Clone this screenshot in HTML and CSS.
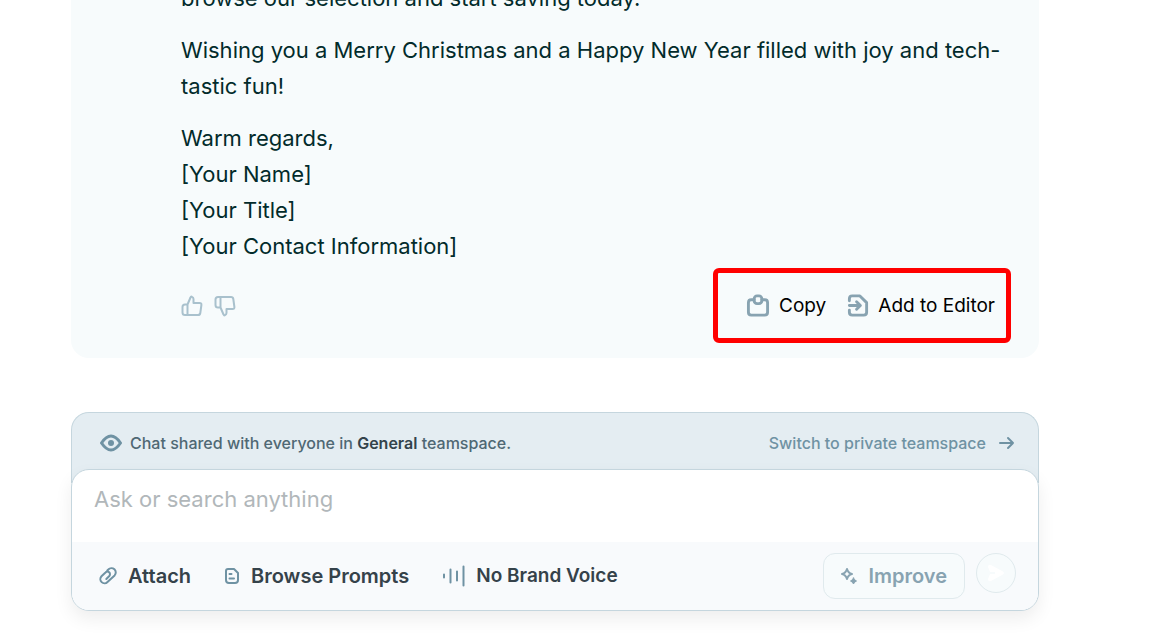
FILE: index.html
```html
<!DOCTYPE html>
<html lang="en">
<head>
    <meta charset="UTF-8">
    <meta name="viewport" content="width=device-width, initial-scale=1.0">
    <title>Chat</title>
    <link rel="stylesheet" href="styles.css">
</head>
<body>
    <main class="chat">
        <article class="message">
            <div class="message-text">
                <p>browse our selection and start saving today.</p>
                <p>Wishing you a Merry Christmas and a Happy New Year filled with joy and tech-tastic fun!</p>
                <p>Warm regards,<br>[Your Name]<br>[Your Title]<br>[Your Contact Information]</p>
            </div>
            <div class="message-footer">
                <div class="feedback">
                    <button type="button" aria-label="Good response">
                        <svg width="22" height="22" viewBox="0 0 22 22"><path d="M6.5 9.5 9.5 2.5Q10 1.2 11 1.8Q12.5 2.5 12.5 4V8H18.5Q20.7 8 20.4 10L19.3 18Q19 20 17 20H4Q1.5 20 1.5 17.5V12Q1.5 9.5 4 9.5H6.5V20"/></svg>
                    </button>
                    <button type="button" aria-label="Bad response">
                        <svg width="22" height="22" viewBox="0 0 22 22"><path d="M6.5 12.5 9.5 19.5Q10 20.8 11 20.2Q12.5 19.5 12.5 18V14H18.5Q20.7 14 20.4 12L19.3 4Q19 2 17 2H4Q1.5 2 1.5 4.5V10Q1.5 12.5 4 12.5H6.5V2"/></svg>
                    </button>
                </div>
                <div class="message-actions">
                    <button type="button">
                        <svg width="24" height="24" viewBox="0 0 24 24"><path d="M8 6H5Q2 6 2 9V19Q2 22 5 22H19Q22 22 22 19V9Q22 6 19 6H16"/><rect x="8" y="2" width="8" height="8" rx="3"/></svg>
                        Copy
                    </button>
                    <button type="button">
                        <svg width="22" height="24" viewBox="0 0 22 24"><path d="M2 7V5Q2 2 5 2H13L20 9V19Q20 22 17 22H5Q2 22 2 19V17M2 12H13M9.5 8L13.5 12L9.5 16"/></svg>
                        Add to Editor
                    </button>
                </div>
            </div>
        </article>

        <section class="composer">
            <div class="share-bar">
                <svg class="eye" width="22" height="18" viewBox="0 0 22 18"><path d="M1.5 9Q11-5 20.5 9Q11 23 1.5 9Z"/><circle cx="11" cy="9" r="3"/></svg>
                <span>Chat shared with everyone in <strong>General</strong> teamspace.</span>
                <a href="#">Switch to private teamspace
                    <svg width="16" height="14" viewBox="0 0 16 14"><path d="M1 7H14M9 2L14 7L9 12"/></svg>
                </a>
            </div>
            <form class="prompt">
                <input type="text" placeholder="Ask or search anything" aria-label="Ask or search anything">
                <div class="toolbar">
                    <button type="button" class="tool">
                        <svg width="18" height="18" viewBox="0 0 18 18"><path d="M8.3 3.5L9.3 2.5A3.9 3.9 0 0 1 15.6 8.4L8.5 15A4 4 0 0 1 2.5 9.3L6.5 5.5A2.5 2.5 0 0 1 10.3 9L7.3 12"/></svg>
                        Attach
                    </button>
                    <button type="button" class="tool">
                        <svg width="16" height="18" viewBox="0 0 16 18"><path d="M4 2H10L14 6V13Q14 16 11 16H5Q2 16 2 13V4Q2 2 4 2ZM5.5 7H7.5M5.5 11.5H10"/></svg>
                        Browse Prompts
                    </button>
                    <button type="button" class="tool voice">
                        <svg width="24" height="24" viewBox="0 0 24 24"><path d="M2 10.5V13.5M8.5 5.5V18.5M15 7.5V16.5M21.5 2.5V21.5"/></svg>
                        No Brand Voice
                    </button>
                    <button type="button" class="improve">
                        <svg width="18" height="18" viewBox="0 0 18 18"><path d="M7 2Q8 6 12 7Q8 8 7 12Q6 8 2 7Q6 6 7 2Z"/><path class="spark" d="M13.5 11Q14.3 13.2 16.5 14Q14.3 14.8 13.5 17Q12.7 14.8 10.5 14Q12.7 13.2 13.5 11Z"/></svg>
                        Improve
                    </button>
                    <button type="submit" class="send" aria-label="Send">
                        <svg width="18" height="18" viewBox="0 0 18 18"><path d="M1 3Q1 0 4 1L15 7Q19 9 15 11L4 17Q1 18 1 15L3 10H8V8H3Z"/></svg>
                    </button>
                </div>
            </form>
        </section>
    </main>
</body>
</html>
```
FILE: styles.css
```css
* {
    box-sizing: border-box;
}
body {
    margin: 0;
    background-color: #fff;
    color: #022b2b;
    font-family: Inter, sans-serif;
    overflow: hidden;
}
button, input {
    font: inherit;
    color: inherit;
}
button {
    display: flex;
    align-items: center;
    padding: 0;
    border: 0;
    background: none;
    cursor: pointer;
}
svg {
    flex: none;
    fill: none;
    stroke: #6f92a3;
    stroke-width: 2;
    stroke-linecap: round;
    stroke-linejoin: round;
}
.chat {
    padding: 0 136px 24px 71px;
}
.message {
    margin-top: -20px;
    padding: 0 28px 15px 110px;
    background-color: #f7fbfc;
    border-radius: 0 0 18px 18px;
}
.message-text {
    font-size: 22px;
    line-height: 36px;
}
.message-text p {
    margin: 0 0 16px;
}
.message-text p:last-child {
    margin-bottom: 4px;
}
.message-footer {
    display: flex;
    align-items: center;
    justify-content: space-between;
}
.feedback {
    display: flex;
    gap: 11px;
}
.feedback svg {
    stroke: #a9c1cd;
}
.message-actions {
    display: flex;
    gap: 21px;
    padding: 20px 11px 20px 28px;
    border: 5px solid #f00;
    border-radius: 6px;
    color: #000;
    font-size: 19px;
    line-height: 25px;
}
.message-actions button {
    gap: 9px;
}
.message-actions svg {
    height: 23px;
    stroke: #88a3b1;
    stroke-width: 3;
}
.composer {
    margin-top: 54px;
}
.share-bar {
    display: flex;
    align-items: center;
    gap: 8px;
    padding: 16px 23px 26px 28px;
    border: 1px solid #c5d6de;
    border-bottom: 0;
    border-radius: 18px 18px 0 0;
    background-color: #e4edf2;
    color: #4f6874;
    font-size: 16px;
    font-weight: 500;
    line-height: 28px;
}
.share-bar strong {
    color: #33434b;
    font-weight: 600;
}
.share-bar a {
    display: flex;
    align-items: center;
    gap: 13px;
    margin-left: auto;
    color: #6f92a3;
    text-decoration: none;
}
.eye {
    stroke-width: 3;
}
.eye circle {
    fill: #6f92a3;
    stroke: none;
}
.prompt {
    position: relative;
    margin-top: -14px;
    border: 1px solid #c5d6de;
    border-radius: 18px;
    background-color: #fff;
    box-shadow: 0 8px 18px rgba(0, 0, 0, 0.07);
    overflow: hidden;
}
.prompt input {
    display: block;
    width: 100%;
    height: 72px;
    padding: 0 22px 14px;
    border: 0;
    outline: 0;
    background: none;
    font-size: 22px;
}
.prompt input::placeholder {
    color: #b1b7ba;
}
.toolbar {
    display: flex;
    align-items: center;
    padding: 11px 22px;
    background-color: #f8fafc;
    color: #35424a;
    font-size: 20px;
    font-weight: 600;
    line-height: 24px;
}
.tool {
    gap: 11px;
    margin-left: 5px;
    margin-right: 28px;
}
.voice {
    gap: 10px;
    font-size: 19px;
}
.improve {
    gap: 10px;
    margin-left: auto;
    padding: 10px 17px 10px 16px;
    border: 1px solid #e0eaed;
    border-radius: 12px;
    background-color: #f7fbfc;
    color: #88a3b1;
}
.improve svg {
    stroke: #88a3b1;
}
.improve .spark {
    fill: #88a3b1;
    stroke-width: 1;
}
.send {
    align-self: flex-start;
    justify-content: center;
    width: 40px;
    height: 40px;
    margin-left: 11px;
    border: 1px solid #e0eaed;
    border-radius: 50%;
    background-color: #f7fbfc;
}
.send svg {
    fill: #fff;
    stroke: none;
}
```
